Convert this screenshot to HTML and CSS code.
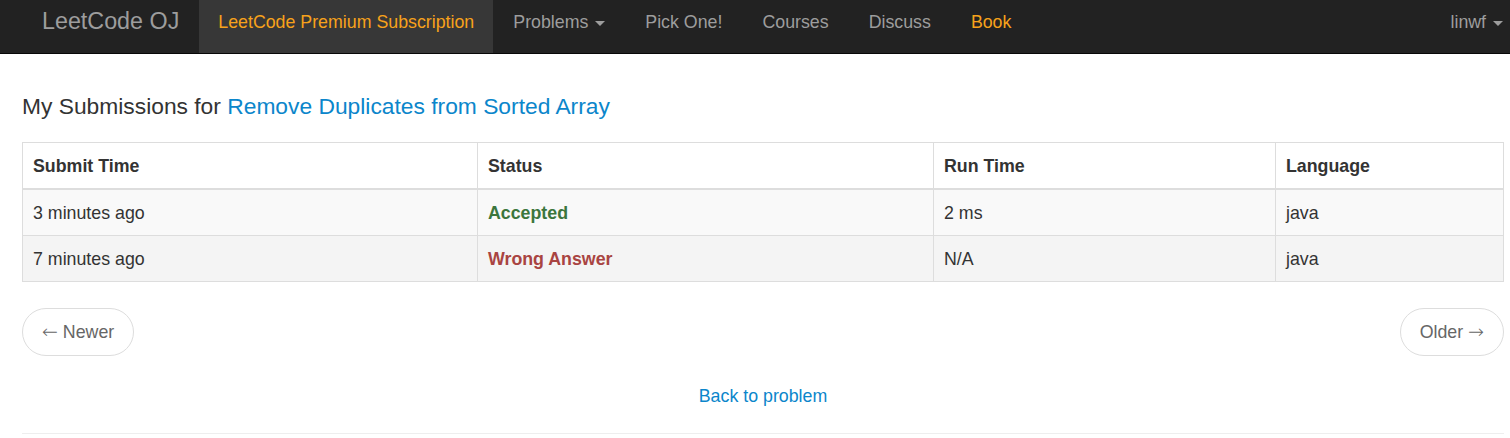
FILE: index.html
```html
<!DOCTYPE html>
<html>
<head>
<meta charset="utf-8">
<link rel="stylesheet" href="styles.css">
</head>
<body>
<nav class="navbar">
  <a class="brand" href="#">LeetCode OJ</a>
  <ul class="nav">
    <li><a class="orange active" href="#">LeetCode Premium Subscription</a></li>
    <li><a href="#">Problems <span class="caret"></span></a></li>
    <li><a href="#">Pick One!</a></li>
    <li><a href="#">Courses</a></li>
    <li><a href="#">Discuss</a></li>
    <li><a class="orange" href="#">Book</a></li>
  </ul>
  <ul class="nav nav-right">
    <li><a class="user" href="#">linwf <span class="caret"></span></a></li>
  </ul>
</nav>
<main class="content">
  <h3 class="title">My Submissions for <a href="#">Remove Duplicates from Sorted Array</a></h3>
  <table class="subs">
    <colgroup>
      <col class="c1"><col class="c2"><col class="c3"><col class="c4">
    </colgroup>
    <thead>
      <tr><th>Submit Time</th><th>Status</th><th>Run Time</th><th>Language</th></tr>
    </thead>
    <tbody>
      <tr class="odd"><td>3 minutes ago</td><td><a class="ok" href="#">Accepted</a></td><td>2 ms</td><td>java</td></tr>
      <tr class="even"><td>7 minutes ago</td><td><a class="bad" href="#">Wrong Answer</a></td><td>N/A</td><td>java</td></tr>
    </tbody>
  </table>
  <div class="pager">
    <a class="pbtn" href="#"><span class="arrow">&larr;</span> Newer</a>
    <a class="pbtn" href="#">Older <span class="arrow">&rarr;</span></a>
  </div>
  <div class="back"><a href="#">Back to problem</a></div>
  <hr class="rule">
</main>
</body>
</html>
```
FILE: styles.css
```css
html, body {
  margin: 0;
  padding: 0;
  background: #fff;
}
body {
  font-family: "Liberation Sans", Arial, sans-serif;
  font-size: 17.8px;
  line-height: 25px;
  color: #333;
}
a { text-decoration: none; }

.navbar {
  display: flex;
  align-items: stretch;
  height: 53px;
  background: #222;
  border-bottom: 1px solid #080808;
}
.brand {
  display: block;
  color: #9d9d9d;
  font-size: 23.3px;
  line-height: 25px;
  padding: 9px 20px 0 42px;
}
.nav {
  list-style: none;
  margin: 0;
  padding: 0;
  display: flex;
}
.nav li { display: flex; }
.nav a {
  display: block;
  color: #9d9d9d;
  padding: 10px 20px 0 20px;
  line-height: 25px;
}
.nav a.orange { color: #f7a21b; }
.nav a.active { background: #373737; padding-left: 19px; padding-right: 19px; }
.nav-right { margin-left: auto; }
.nav a.user { padding-right: 7px; }
.caret {
  display: inline-block;
  width: 0;
  height: 0;
  margin-left: 2px;
  vertical-align: middle;
  border-top: 5px solid;
  border-left: 5px solid transparent;
  border-right: 5px solid transparent;
}

.content {
  padding: 0 6px 0 22px;
}
.title {
  margin: 40px 0 24px 0;
  font-size: 22.8px;
  line-height: 24px;
  font-weight: normal;
  color: #333;
}
.title a { color: #0b86cb; }

.subs {
  width: 100%;
  border-collapse: collapse;
  border: 1px solid #ddd;
}
.c1 { width: 455px; }
.c2 { width: 456px; }
.c3 { width: 342px; }
.subs th, .subs td {
  text-align: left;
  padding: 11px 10px 9px 10px;
  line-height: 25px;
  border: 1px solid #ddd;
  vertical-align: top;
}
.subs thead th {
  font-weight: bold;
  border-bottom: 2px solid #ddd;
}
.subs tr.odd { background: #f9f9f9; }
.subs tr.even { background: #f4f4f4; }
.ok { color: #3c763d; font-weight: bold; }
.bad { color: #a94442; font-weight: bold; }

.pager {
  display: flex;
  justify-content: space-between;
  margin-top: 26px;
}
.pbtn {
  display: inline-block;
  padding: 11px 19px 10px 19px;
  line-height: 25px;
  border: 1px solid #ddd;
  border-radius: 24px;
  color: #666;
  background: #fff;
}
.arrow {
  font-family: "DejaVu Sans", sans-serif;
  font-size: 19px;
  font-weight: 200;
  line-height: 20px;
}
.back {
  text-align: center;
  margin-top: 28px;
}
.back a { color: #0b86cb; }
.rule {
  margin: 24px 0 0 0;
  border: 0;
  border-top: 1px solid #eee;
}
```
